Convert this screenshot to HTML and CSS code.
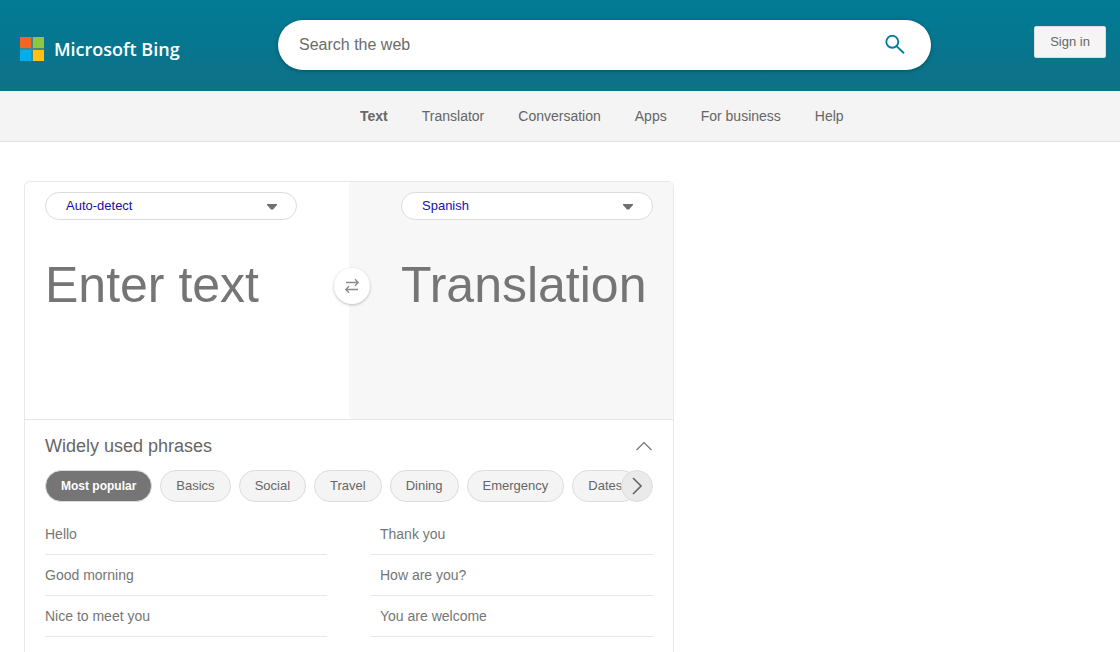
FILE: index.html
```html
<!DOCTYPE html>
<html lang="en">
<head>
<meta charset="utf-8">
<title>Bing Microsoft Translator</title>
<link rel="stylesheet" href="styles.css">
</head>
<body>
<header class="header">
  <a class="logo" href="#">
    <svg class="logo-mark" viewBox="0 0 24 24" aria-hidden="true">
      <path fill="#3f8a86" d="M0 0h24v24H0z"/>
      <path fill="#f26522" d="M0 0h11v11H0z"/>
      <path fill="#8dc63f" d="M13 0h11v11H13z"/>
      <path fill="#00aeef" d="M0 13h11v11H0z"/>
      <path fill="#ffc20e" d="M13 13h11v11H13z"/>
    </svg>
    <span>Microsoft Bing</span>
  </a>
  <form class="search" role="search">
    <input class="search-input" type="search" placeholder="Search the web" aria-label="Search the web">
    <button class="search-button" type="submit" aria-label="Search">
      <svg width="20" height="20" viewBox="0 0 20 20" fill="none" stroke="#007f9b" stroke-width="1.9" aria-hidden="true">
        <circle cx="7.300" cy="6.800" r="6"/>
        <path d="M11.600 11.100 19 18.200"/>
      </svg>
    </button>
  </form>
  <button class="sign-in" type="button">Sign in</button>
</header>
<nav class="nav" aria-label="Translator">
  <a class="nav-link nav-link-active" href="#">Text</a>
  <a class="nav-link" href="#">Translator</a>
  <a class="nav-link" href="#">Conversation</a>
  <a class="nav-link" href="#">Apps</a>
  <a class="nav-link" href="#">For business</a>
  <a class="nav-link" href="#">Help</a>
</nav>
<main class="main">
  <div class="card">
    <div class="panes">
      <section class="pane pane-source">
        <select class="language" aria-label="Source language"><option>Auto-detect</option></select>
        <textarea class="text" placeholder="Enter text" aria-label="Enter text"></textarea>
      </section>
      <section class="pane pane-target">
        <select class="language" aria-label="Target language"><option>Spanish</option></select>
        <textarea class="text" placeholder="Translation" aria-label="Translation" readonly></textarea>
      </section>
      <button class="swap" type="button" aria-label="Swap languages">
        <svg width="16" height="16" viewBox="0 0 16 16" fill="none" stroke="#8a8a8a" stroke-width="1.3" aria-hidden="true">
          <path d="M2 4.500h12M11 1.300l3.200 3.200L11 7.700M14 11.500H1.800M5 8.300l-3.200 3.200L5 14.700"/>
        </svg>
      </button>
    </div>
    <section class="phrases">
      <div class="phrases-head">
        <h2 class="phrases-title">Widely used phrases</h2>
        <button class="collapse" type="button" aria-label="Collapse phrases">
          <svg width="18" height="10" viewBox="0 0 18 10" fill="none" stroke="#707070" stroke-width="1.1" aria-hidden="true"><path d="M1.500 9 9 1.500 16.500 9"/></svg>
        </button>
      </div>
      <div class="categories">
        <div class="chips">
          <button class="chip chip-active" type="button">Most popular</button>
          <button class="chip" type="button">Basics</button>
          <button class="chip" type="button">Social</button>
          <button class="chip" type="button">Travel</button>
          <button class="chip" type="button">Dining</button>
          <button class="chip" type="button">Emergency</button>
          <button class="chip" type="button">Dates</button>
        </div>
        <button class="next" type="button" aria-label="More categories">
          <svg width="10" height="18" viewBox="0 0 10 18" fill="none" stroke="#666" stroke-width="1.600" aria-hidden="true"><path d="M1 1l8 8-8 8"/></svg>
        </button>
      </div>
      <div class="phrase-list">
        <a class="phrase" href="#">Hello</a>
        <a class="phrase phrase-end" href="#">Thank you</a>
        <a class="phrase" href="#">Good morning</a>
        <a class="phrase phrase-end" href="#">How are you?</a>
        <a class="phrase" href="#">Nice to meet you</a>
        <a class="phrase phrase-end" href="#">You are welcome</a>
      </div>
    </section>
  </div>
</main>
</body>
</html>
```
FILE: styles.css
```css
* {
  box-sizing: border-box;
}

body {
  margin: 0;
  min-height: 100vh;
  display: flex;
  flex-direction: column;
  background: #fff;
  color: #666;
  font-family: Arial, "Liberation Sans", sans-serif;
  font-size: 14px;
}

button,
input,
select,
textarea {
  font-family: inherit;
  margin: 0;
}

button {
  padding: 0;
  border: 0;
  background: none;
  color: inherit;
}

a {
  color: inherit;
  text-decoration: none;
}

svg {
  display: block;
}

.header {
  display: grid;
  grid-template-columns: 258px minmax(0, 653px) 1fr;
  align-items: start;
  padding: 20px 14px 21px 20px;
  background: linear-gradient(#007b96, #0e7187);
}

.logo {
  display: flex;
  align-items: center;
  gap: 10px;
  padding-top: 16px;
  color: #fff;
  font-family: "Open Sans", "Noto Sans", sans-serif;
  font-size: 18px;
  font-weight: 600;
  line-height: 26px;
}

.logo-mark {
  width: 24px;
  height: 24px;
}

.search {
  display: flex;
  align-items: center;
  height: 50px;
  padding: 0 26px 0 21px;
  border-radius: 25px;
  background: #fff;
  box-shadow: 0 1px 4px rgba(0, 0, 0, 0.3);
}

.search-input {
  flex: 1;
  min-width: 0;
  padding: 0;
  border: 0;
  outline: 0;
  background: none;
  font-size: 16px;
}

.search-input::placeholder {
  color: #6b6b6b;
}

.sign-in {
  justify-self: end;
  width: 72px;
  height: 32px;
  margin-top: 6px;
  padding-bottom: 2px;
  border: 1px solid #ddd;
  border-radius: 2px;
  background: #f5f5f5;
  font-size: 13px;
}

.nav {
  display: flex;
  gap: 34px;
  padding: 0 20px 0 360px;
  border-bottom: 1px solid #e1e1e1;
  background: #f4f4f4;
  line-height: 50px;
}

.nav-link-active {
  font-weight: bold;
}

.main {
  flex: 1;
  display: flex;
  padding: 39px 24px 0;
}

.card {
  width: 100%;
  max-width: 650px;
  border: 1px solid #e8e8e8;
  border-bottom: 0;
  border-radius: 6px 6px 0 0;
}

.panes {
  position: relative;
  display: grid;
  grid-template-columns: 1fr 1fr;
  border-bottom: 1px solid #e5e5e5;
}

.pane {
  display: flex;
  flex-direction: column;
  gap: 36px;
  padding: 10px 20px 27px;
}

.pane-source {
  padding-right: 52px;
}

.pane-target {
  padding-left: 52px;
  border-radius: 4px;
  background: #f7f7f7;
}

.language {
  appearance: none;
  height: 28px;
  padding: 0 40px 2px 20px;
  border: 1px solid #dcdcdc;
  border-radius: 14px;
  background: #fff url("data:image/svg+xml,%3Csvg xmlns='http://www.w3.org/2000/svg' viewBox='0 0 10 6'%3E%3Cpath d='M0 0h10v1L6 5.500H4L0 1z' fill='%23707070'/%3E%3C/svg%3E") no-repeat right 19px top 11px / 10px 6px;
  color: #1a0dab;
  font-size: 13px;
}

.text {
  display: block;
  width: 100%;
  height: 136px;
  padding: 0;
  border: 0;
  outline: 0;
  overflow: hidden;
  resize: none;
  background: none;
  font-size: 50px;
  line-height: 58px;
}

.text::placeholder {
  color: #757575;
}

.swap {
  position: absolute;
  top: 86px;
  left: calc(50% + 3px);
  display: grid;
  place-items: center;
  width: 36px;
  height: 36px;
  transform: translateX(-50%);
  border-radius: 50%;
  background: #fff;
  box-shadow: 0 1px 3px rgba(0, 0, 0, 0.25);
}

.phrases {
  padding: 14px 20px 15px;
}

.phrases-head {
  display: flex;
  align-items: center;
  justify-content: space-between;
  margin-bottom: 12px;
}

.phrases-title {
  margin: 0;
  font-size: 18px;
  font-weight: normal;
  line-height: 24px;
}

.categories {
  position: relative;
  overflow: hidden;
  border-radius: 16px;
}

.chips {
  display: flex;
  gap: 8px;
}

.chip {
  flex: none;
  height: 32px;
  padding: 0 15px 1px;
  border: 1px solid #dcdcdc;
  border-radius: 16px;
  background: #f4f4f4;
  font-size: 13px;
}

.chip-active {
  background: #757575;
  color: #fff;
  font-size: 12px;
  font-weight: bold;
}

.next {
  position: absolute;
  top: 0;
  right: 0;
  display: grid;
  place-items: center;
  width: 32px;
  height: 32px;
  border: 1px solid #dcdcdc;
  border-radius: 50%;
  background: #eaeaea;
}

.phrase-list {
  display: grid;
  grid-template-columns: 1fr 1fr;
  column-gap: 44px;
  margin-top: 12px;
}

.phrase {
  border-bottom: 1px solid #e8e8e8;
  color: #767676;
  line-height: 40px;
}

.phrase-end {
  padding-left: 9px;
}
```
